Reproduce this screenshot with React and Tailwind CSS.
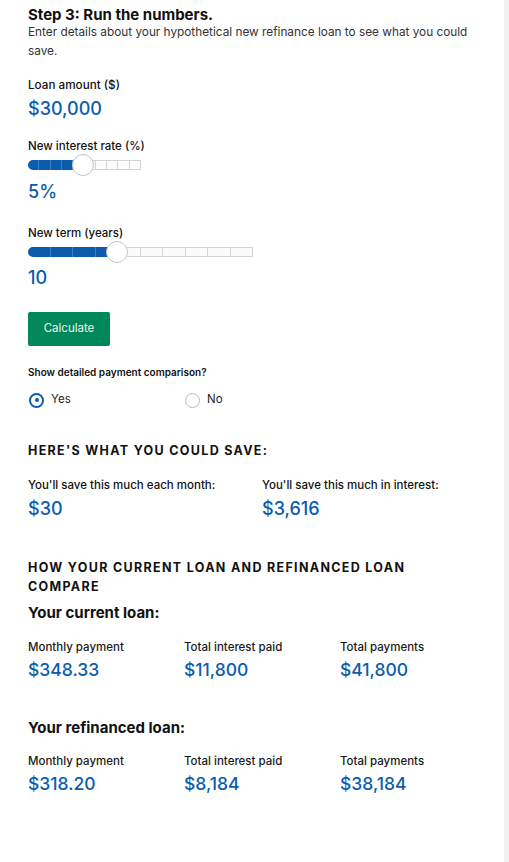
import React from "react";

const BLUE = "text-[#0b5cad]";

function Slider({ width, cells, filled, thumb }) {
  const cellW = width / cells;
  return (
    <div className="relative h-[22px] flex items-center" style={{ width }}>
      <div className="flex h-[10px] w-full">
        {Array.from({ length: cells }).map((_, i) =>
          i < filled ? (
            <div
              key={i}
              className={`h-full bg-[#0b5cad] border-r border-[#3f7fc2] ${i === 0 ? "rounded-l-full" : ""}`}
              style={{ width: cellW }}
            />
          ) : (
            <div
              key={i}
              className="h-full bg-[#fbfbfb] border-t border-b border-r border-[#d4d4d4]"
              style={{ width: cellW }}
            />
          )
        )}
      </div>
      <div
        className="absolute top-0 w-[22px] h-[22px] rounded-full bg-white border border-[#c4c4c4]"
        style={{ left: thumb - 11 }}
      />
    </div>
  );
}

function Stat({ label, value }) {
  return (
    <div className="w-[156px]">
      <div className="text-[11.5px] leading-[16px] font-medium text-[#1a1a1a]">{label}</div>
      <div className={`mt-[4px] text-[17.5px] leading-[22px] font-medium ${BLUE}`}>{value}</div>
    </div>
  );
}

export default function App() {
  return (
    <div className="flex h-[862px] bg-white text-[#111]" style={{ fontFamily: "Inter, 'Noto Sans', sans-serif" }}>
      <div className="flex-1 pl-[28px] pt-[6px]">
        <h2 className="text-[15px] leading-[17px] font-bold text-[#111]">Step 3: Run the numbers.</h2>
        <p className="text-[11.8px] leading-[19px] text-[#333] pr-[20px]">
          Enter details about your hypothetical new refinance loan to see what you could save.
        </p>

        <div className="mt-[16px] text-[11.7px] leading-[16px] font-medium">Loan amount ($)</div>
        <div className={`mt-[5px] text-[18px] leading-[22px] font-medium ${BLUE}`}>$30,000</div>

        <div className="mt-[18px] text-[11.5px] leading-[16px] font-medium">New interest rate (%)</div>
        <Slider width={113} cells={10} filled={4} thumb={54.5} />
        <div className={`mt-[5px] text-[18px] leading-[22px] font-medium ${BLUE}`}>5%</div>

        <div className="mt-[22px] text-[11.5px] leading-[16px] font-medium">New term (years)</div>
        <Slider width={225} cells={10} filled={4} thumb={88.5} />
        <div className={`mt-[4px] text-[18px] leading-[22px] font-medium ${BLUE}`}>10</div>

        <button className="mt-[23px] w-[82px] h-[34px] bg-[#00875a] text-[#e9f6ef] text-[11.5px] rounded-[2px]">
          Calculate
        </button>

        <div className="mt-[19px] text-[10px] leading-[14px] font-semibold">Show detailed payment comparison?</div>
        <div className="mt-[11px] flex h-[20px] items-center">
          <label className="w-[157px] flex items-center gap-[7px]">
            <span className="ml-[1px] w-[15px] h-[15px] rounded-full border-2 border-[#0b5cad] flex items-center justify-center">
              <span className="w-[4px] h-[4px] rounded-full bg-[#0b5cad]" />
            </span>
            <span className="text-[11.5px] text-[#222]">Yes</span>
          </label>
          <label className="flex items-center gap-[7px]">
            <span className="w-[15px] h-[15px] rounded-full border-[1.5px] border-[#bdbdbd]" />
            <span className="text-[11.5px] text-[#222]">No</span>
          </label>
        </div>

        <h3 className="mt-[32px] text-[12.5px] leading-[18px] font-bold tracking-[0.105em]">HERE'S WHAT YOU COULD SAVE:</h3>
        <div className="mt-[17px] flex">
          <div className="w-[234px]">
            <div className="text-[11.5px] leading-[16px] font-medium">You'll save this much each month:</div>
            <div className={`mt-[5px] text-[18px] leading-[22px] font-medium ${BLUE}`}>$30</div>
          </div>
          <div>
            <div className="text-[11.5px] leading-[16px] font-medium">You'll save this much in interest:</div>
            <div className={`mt-[5px] text-[18px] leading-[22px] font-medium ${BLUE}`}>$3,616</div>
          </div>
        </div>

        <h3 className="mt-[38px] text-[12.5px] leading-[19px] font-bold tracking-[0.105em] pr-[70px]">
          HOW YOUR CURRENT LOAN AND REFINANCED LOAN COMPARE
        </h3>
        <h4 className="mt-[7px] text-[15px] leading-[20px] font-bold">Your current loan:</h4>
        <div className="mt-[16px] flex">
          <Stat label="Monthly payment" value="$348.33" />
          <Stat label="Total interest paid" value="$11,800" />
          <Stat label="Total payments" value="$41,800" />
        </div>

        <h4 className="mt-[37px] text-[15px] leading-[20px] font-bold">Your refinanced loan:</h4>
        <div className="mt-[15px] flex">
          <Stat label="Monthly payment" value="$318.20" />
          <Stat label="Total interest paid" value="$8,184" />
          <Stat label="Total payments" value="$38,184" />
        </div>
      </div>
      <div className="w-[5px] bg-[#f1f1f1]" />
    </div>
  );
}
